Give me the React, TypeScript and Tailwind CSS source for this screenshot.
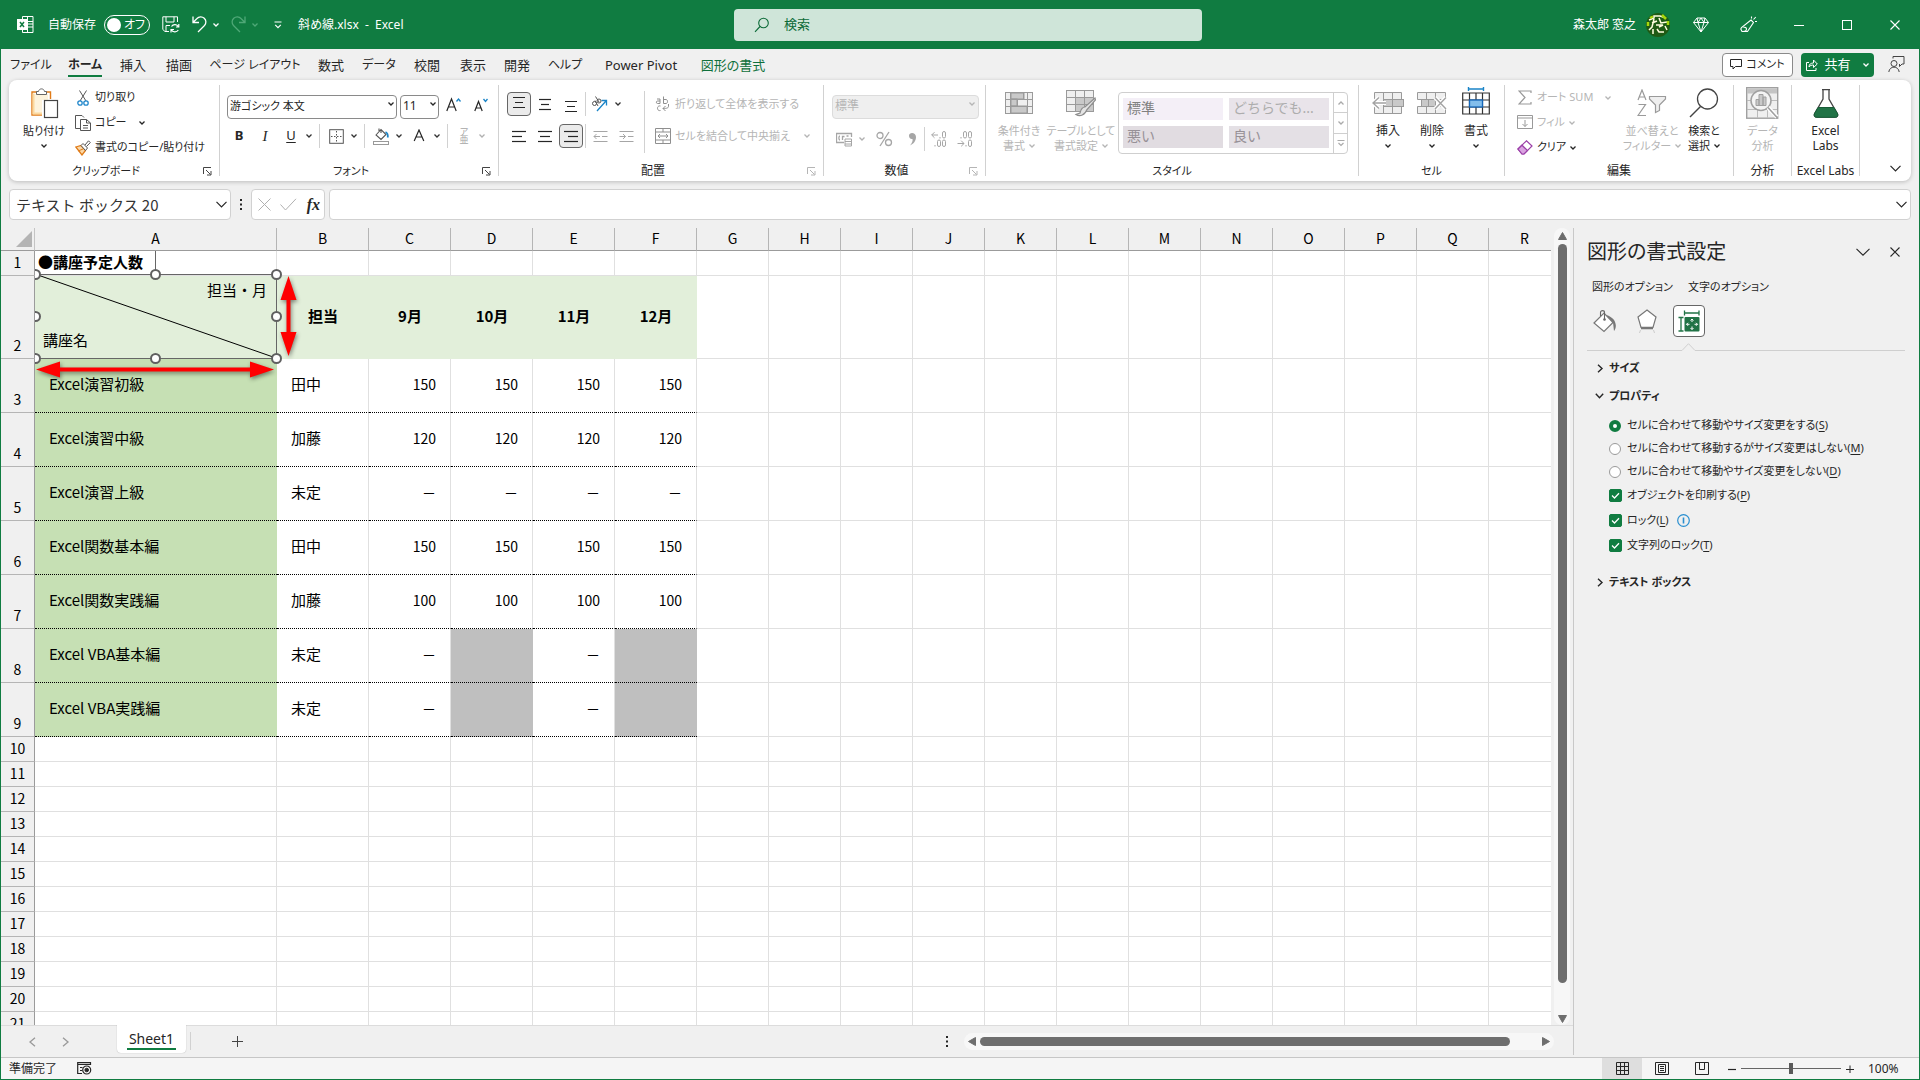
import React, { useState } from "react";

const GREEN = "#107c41";

/* Labels that contain kana are set one step smaller than pure kanji labels. */
const labelSize = (text: string) => (/[ぁ-んァ-ヶ]/.test(text) ? "text-[11px]" : "text-xs");

type SvgProps = { w: number; h: number; children: React.ReactNode; className?: string };
function Svg({ w, h, children, className = "" }: SvgProps) {
  return (
    <svg width={w} height={h} viewBox={`0 0 ${w} ${h}`} fill="none" stroke="currentColor" className={`shrink-0 ${className}`} aria-hidden="true">
      {children}
    </svg>
  );
}

function Chevron({ className = "" }: { className?: string }) {
  return (
    <Svg w={6} h={4} className={className}>
      <path d="M0.5 0.5 L3 3 L5.5 0.5" strokeWidth="1.3" />
    </Svg>
  );
}

function BigChevron({ className = "" }: { className?: string }) {
  return (
    <Svg w={11} h={7} className={className}>
      <path d="M0.5 0.8 L5.5 5.8 L10.5 0.8" strokeWidth="1.2" />
    </Svg>
  );
}

function DropArrow({ disabled = false }: { disabled?: boolean }) {
  return (
    <button aria-label="その他のオプション" disabled={disabled} className="flex h-6 w-3 items-center justify-center text-[#333] disabled:text-[#b0b0b0]">
      <Chevron />
    </button>
  );
}

function Launcher({ disabled = false }: { disabled?: boolean }) {
  return (
    <Svg w={9} h={9} className={disabled ? "text-[#b5b5b5]" : "text-[#444]"}>
      <path d="M0.5 7 V0.5 H8 M3 3 L7.5 7.5 M8 4 V8 H4" />
    </Svg>
  );
}

function Group({ label, width, launcher, disabledLauncher, children }: { label: string; width: string; launcher?: boolean; disabledLauncher?: boolean; children: React.ReactNode }) {
  return (
    <section aria-label={label} className={`flex shrink-0 flex-col border-r border-[#d1d1d1] ${width}`}>
      <div className="flex min-h-0 flex-1">{children}</div>
      <div className="flex h-2.5 items-center leading-3.5">
        <span className={`flex-1 text-center whitespace-nowrap ${labelSize(label)}`}>{label}</span>
        {launcher && (
          <span className="flex w-4">
            <Launcher disabled={disabledLauncher} />
          </span>
        )}
      </div>
    </section>
  );
}

function IconButton({ label, pressed = false, disabled = false, children }: { label: string; pressed?: boolean; disabled?: boolean; children: React.ReactNode }) {
  return (
    <button
      aria-label={label}
      aria-pressed={pressed}
      disabled={disabled}
      className={`flex h-6 w-6 shrink-0 items-center justify-center rounded border disabled:text-[#a6a6a6] ${pressed ? "border-[#666] bg-[#ebebeb]" : "border-transparent"}`}
    >
      {children}
    </button>
  );
}

function BigButton({ icon, lines, drop, width, disabled = false }: { icon: React.ReactNode; lines: string[]; drop?: boolean; width: string; disabled?: boolean }) {
  return (
    <button disabled={disabled} className={`flex shrink-0 flex-col items-center pt-0.5 leading-[15px] whitespace-nowrap disabled:text-[#b5b5b5] ${labelSize(lines[0])} ${width}`}>
      <span className="mb-1 flex h-8 items-center justify-center">{icon}</span>
      {lines.map((line, i) => (
        <span key={line} className="flex h-[15px] items-center gap-1">
          {line}
          {drop && lines.length > 1 && i === lines.length - 1 && <Chevron />}
        </span>
      ))}
      {drop && lines.length === 1 && (
        <span className="flex h-[15px] items-center">
          <Chevron />
        </span>
      )}
    </button>
  );
}

function RowButton({ icon, text, drop, disabled = false, wide = false }: { icon: React.ReactNode; text: string; drop?: boolean; disabled?: boolean; wide?: boolean }) {
  return (
    <button disabled={disabled} className={`flex h-[25px] items-center whitespace-nowrap disabled:text-[#b5b5b5] ${labelSize(text)}`}>
      <span className="mr-1 flex w-4 justify-center">{icon}</span>
      {text}
      {drop && <Chevron className={wide ? "ml-3" : "ml-1"} />}
    </button>
  );
}

const VSep = () => <span className="mx-1 h-6 w-px shrink-0 bg-[#d1d1d1]" />;

function Lines({ rows }: { rows: [number, number][] }) {
  return (
    <Svg w={16} h={15}>
      {rows.map(([a, b], i) => (
        <path key={i} d={`M${a} ${i * 5 + 2.5} H${b}`} strokeWidth="1.2" />
      ))}
    </Svg>
  );
}

/* ---------- title bar ---------- */

function TitleBar() {
  return (
    <header className="flex h-[49px] shrink-0 items-center bg-[#107c41] pt-2 pb-2 text-white">
      <div className="flex flex-1 items-center pl-4 text-xs whitespace-nowrap">
        <Svg w={17} h={17}>
          <path d="M5.5 3 V0.5 H16 V16.5 H5.5 V14 M5.5 5.5 H16 M9 11 H16 M10.5 0.5 V16.5 M16 8 H9" />
          <rect x="0.5" y="3.5" width="9" height="10" fill="white" />
          <path d="M3 6 L7 11 M7 6 L3 11" stroke={GREEN} strokeWidth="1.5" />
        </Svg>
        <span className="ml-3.5">自動保存</span>
        <button role="switch" aria-checked="false" aria-label="自動保存" className="ml-2 flex h-5 w-[46px] items-center justify-between rounded-full border border-white pr-1 pl-0.5 text-xs leading-none">
          <span className="h-3.5 w-3.5 rounded-full bg-white" />
          オフ
        </button>
        <button aria-label="上書き保存" className="ml-3">
          <Svg w={18} h={17}>
            <path d="M7 15.5 H3 L0.8 13.5 V0.8 H15.5 V6 M4 0.8 V6 H12 V0.8 M4 15 V9.5 H8" />
            <path d="M16.8 8 V11 H14 M16.5 11 A4 4 0 0 0 9.5 10.5 M9 16.5 V13.5 H12 M9.3 13.5 A4 4 0 0 0 16.3 14" strokeWidth="1.2" />
          </Svg>
        </button>
        <button aria-label="元に戻す" className="ml-3">
          <Svg w={15} h={17}>
            <path d="M1 0.5 V6.5 H7 M1 6.5 L5 2.5 A5 5 0 0 1 12.5 9.5 L6 16" strokeWidth="1.3" />
          </Svg>
        </button>
        <Chevron className="ml-1.5" />
        <button aria-label="やり直し" className="ml-3 text-[#4fa877]">
          <Svg w={15} h={17}>
            <path d="M14 0.5 V6.5 H8 M14 6.5 L10 2.5 A5 5 0 0 0 2.5 9.5 L9 16" strokeWidth="1.3" />
          </Svg>
        </button>
        <Chevron className="ml-1.5 text-[#4fa877]" />
        <Svg w={8} h={8} className="ml-4">
          <path d="M0.5 1 H7.5 M1.2 3.8 L4 6.6 L6.8 3.8" strokeWidth="1.2" />
        </Svg>
        <h1 className="ml-4">斜め線.xlsx&nbsp; -&nbsp; Excel</h1>
      </div>
      <label className="flex h-8 w-[468px] items-center gap-3.5 rounded bg-[#cfe5d9] pl-5 text-[#0b6a37]">
        <Svg w={16} h={16}>
          <circle cx="9.5" cy="6" r="4.8" strokeWidth="1.1" />
          <path d="M6 9.5 L1 14.8" strokeWidth="1.1" />
        </Svg>
        <input aria-label="検索" placeholder="検索" className="w-full bg-transparent text-[13px] outline-none placeholder:text-[#0b6a37]" />
      </label>
      <div className="flex flex-1 items-center justify-end text-xs">
        <span className="mr-2.5">森太郎 窓之</span>
        <Svg w={24} h={24} className="mr-[23px]">
          <circle cx="12" cy="12" r="12" fill="#1f5a14" stroke="none" />
          <path d="M3 7 L8 5 V3 H14 L20 5 M6 10 L11 8 M8 6 L6 14 L3 17 M13 5 L15 10 L21 9 M10 12 H17 L13 14 M7 16 V21 M11 16 L13 19 H18 M19 13 L21 17" stroke="#fffde0" strokeWidth="1.5" />
          <path d="M4 5 L7 3.5 M16 2 L20 6 M22 8 V12 M2 9 V13" stroke="#a6d80c" strokeWidth="2.5" />
        </Svg>
        <button aria-label="Premium" className="mr-[31px]">
          <Svg w={16} h={16}>
            <path d="M4 1 H12 L15.5 5.5 L8 15 L0.5 5.5 Z M0.5 5.5 H15.5 M5 5.5 L8 15 L11 5.5 L8 1 L5 5.5 L4 1 M11 5.5 L12 1" />
          </Svg>
        </button>
        <button aria-label="新機能" className="mr-[37px]">
          <Svg w={17} h={17}>
            <path d="M11 4 L13.5 6.5 L7.5 15.5 H2 L0.8 13 L1.5 11.5 Z M3 15.5 C5.5 15.5 6.5 14.5 6.5 13 C6.5 11.5 5 10.8 3.5 11.5 M11.5 2.5 V0.5 M13.5 3.5 L15.8 1 M15 5.5 H17" strokeWidth="1.1" />
          </Svg>
        </button>
        <button aria-label="最小化" className="mr-[38px]">
          <Svg w={10} h={10}>
            <path d="M0 5.5 H10" />
          </Svg>
        </button>
        <button aria-label="元に戻す (縮小)" className="mr-[38px]">
          <Svg w={10} h={10}>
            <rect x="0.5" y="0.5" width="9" height="9" />
          </Svg>
        </button>
        <button aria-label="閉じる" className="mr-[19px]">
          <Svg w={10} h={10}>
            <path d="M0.5 0.5 L9.5 9.5 M9.5 0.5 L0.5 9.5" strokeWidth="1.1" />
          </Svg>
        </button>
      </div>
    </header>
  );
}

/* ---------- ribbon tabs ---------- */

const tabs: { label: string; w: string }[] = [
  { label: "ファイル", w: "w-14" },
  { label: "ホーム", w: "w-13" },
  { label: "挿入", w: "w-11" },
  { label: "描画", w: "w-12" },
  { label: "ページ レイアウト", w: "w-26" },
  { label: "数式", w: "w-12" },
  { label: "データ", w: "w-12" },
  { label: "校閲", w: "w-12" },
  { label: "表示", w: "w-11" },
  { label: "開発", w: "w-11" },
  { label: "ヘルプ", w: "w-13" },
  { label: "Power Pivot", w: "w-25" },
  { label: "図形の書式", w: "w-21" },
];

function TabRow() {
  return (
    <nav className="flex h-[31px] shrink-0 items-center text-[13px]">
      <div role="tablist" className="flex flex-1 pl-0.5">
        {tabs.map((t) => (
          <button
            key={t.label}
            role="tab"
            aria-selected={t.label === "ホーム"}
            className={`flex h-6 shrink-0 justify-center whitespace-nowrap ${/[ァ-ヶ]/.test(t.label) ? "text-xs" : "text-[13px]"} ${t.w}`}
          >
            <span
              className={
                t.label === "ホーム"
                  ? "border-b-2 border-[#107c41] leading-[23px] font-bold"
                  : t.label === "図形の書式"
                    ? "leading-6 text-[#0f703b]"
                    : "leading-6"
              }
            >
              {t.label}
            </span>
          </button>
        ))}
      </div>
      <button className="flex h-6 w-[71px] items-center justify-center gap-1 rounded border border-[#8a8a8a] bg-white text-[11px] whitespace-nowrap">
        <Svg w={12} h={11}>
          <path d="M0.5 0.5 H11.5 V7.5 H5.5 L3 10 V7.5 H0.5 Z" />
        </Svg>
        コメント
      </button>
      <button className="ml-2 flex h-6 w-[73px] items-center justify-center gap-1.5 rounded bg-[#107c41] text-[13px] text-white">
        <Svg w={12} h={12}>
          <path d="M3 3.5 H0.5 V11.5 H10 V9 M3 8 C3 5 5 4 7.5 4 V1 L11.3 5 L7.5 8.5 V6 C5.5 6 4 6.5 3 8 Z" />
        </Svg>
        共有
        <Chevron className="ml-1.5" />
      </button>
      <button aria-label="フィードバック" className="mr-3.5 ml-3.5 text-[#444]">
        <Svg w={17} h={17}>
          <circle cx="6" cy="7.5" r="3" />
          <path d="M0.8 16 C1.5 9.5 10.5 9.5 11.2 16 M5 2.5 V0.5 H16 V8 H14 L11.5 10.5 V8" />
        </Svg>
      </button>
    </nav>
  );
}

/* ---------- ribbon icons ---------- */

const PasteIcon = (
  <Svg w={29} h={32}>
    <path d="M7 5 H2 V28 H12" stroke="#e07b18" strokeWidth="1.4" />
    <path d="M4 7 V26 H12 V13 H18 V7 Z" fill="#fdf3dd" stroke="none" />
    <path d="M3.5 6.5 V26.5 H12" stroke="#fbd9a0" strokeWidth="2" />
    <path d="M16 5 H20.5 V12" stroke="#e07b18" strokeWidth="1.4" />
    <path d="M6.5 7.5 V4.5 H8.5 C9 1 14 1 14.5 4.5 H16.5 V7.5 Z" fill="#fff" stroke="#666" />
    <rect x="14.5" y="13.5" width="13" height="17" fill="#fff" stroke="#444" strokeWidth="1.2" />
  </Svg>
);
const CutIcon = (
  <Svg w={12} h={16}>
    <path d="M2.5 0.5 L9 11 M9.5 0.5 L3 11" stroke="#555" />
    <circle cx="3" cy="13" r="2.2" stroke="#2288cc" strokeWidth="1.3" />
    <circle cx="9" cy="13" r="2.2" stroke="#2288cc" strokeWidth="1.3" />
  </Svg>
);
const CopyIcon = (
  <Svg w={16} h={16}>
    <path d="M6 13.5 H0.5 V0.5 H7 L9 2.5" stroke="#555" />
    <path d="M5.5 4.5 H11.5 L15.5 8 V15.5 H5.5 Z M11.5 4.5 V8 H15.5 M8 10.5 H13 M8 13 H13" fill="#fff" stroke="#555" />
  </Svg>
);
const BrushIcon = (
  <Svg w={16} h={16}>
    <path d="M0.8 7 L6 5.5 L10.5 10.5 L7 15 Z" fill="#fbd9a8" stroke="#e07b18" strokeWidth="1.3" />
    <path d="M3 11 L8 9" stroke="#e07b18" />
    <path d="M6 5.5 L8 3.5 L12.5 8 L10.5 10.5 Z M10 5 L13.5 0.8 L15.3 2.6 L11.5 6.5" fill="#fff" stroke="#555" />
  </Svg>
);
const CondIcon = (
  <Svg w={28} h={28} className="text-[#9a9a9a]">
    <rect x="0.5" y="3.5" width="27" height="21" fill="#efefef" />
    <rect x="6" y="4" width="13" height="6" fill="#c9c9c9" />
    <rect x="6" y="10" width="6" height="7" fill="#c9c9c9" />
    <rect x="6" y="17" width="16" height="7" fill="#c9c9c9" />
    <path d="M0.5 10.5 H27.5 M0.5 17.5 H27.5 M5.5 3.5 V24.5 M22.5 3.5 V24.5 M12.5 10 V17 M18.5 3.5 V10.5" />
  </Svg>
);
const TableFmtIcon = (
  <Svg w={30} h={28} className="text-[#9a9a9a]">
    <rect x="0.5" y="1.5" width="27" height="21" fill="#efefef" />
    <rect x="10" y="9" width="17" height="13" fill="#c9c9c9" stroke="none" />
    <path d="M0.5 8.5 H27.5 M0.5 15.5 H27.5 M9.5 1.5 V22.5 M18.5 1.5 V22.5" />
    <path d="M29 9 L19 18 C16 18 15 20 14 24 L10 25.5 C14 28 19 26 21 20.5 L29.5 11 Z" fill="#e4e4e4" stroke="#8d8d8d" strokeWidth="1.2" />
  </Svg>
);
const InsertIcon = (
  <Svg w={32} h={24} className="text-[#9a9a9a]">
    <path d="M2.5 1.5 H29.5 V22.5 H2.5 Z M11.5 1.5 V22.5 M20.5 1.5 V22.5" fill="#efefef" />
    <rect x="11.5" y="8.5" width="20" height="7" fill="#c9c9c9" />
    <path d="M20.5 8.5 V15.5" />
    <path d="M14 12 H2 M7 6.5 L1 12 L7 17.5" stroke="#fff" strokeWidth="4" />
    <path d="M14 12 H1 M7 6.5 L1 12 L7 17.5" stroke="#a3a3a3" strokeWidth="1.4" />
  </Svg>
);
const DeleteIcon = (
  <Svg w={31} h={24} className="text-[#9a9a9a]">
    <path d="M0.5 1.5 H28.5 V8.5 H0.5 Z M0.5 15.5 H28.5 V22.5 H0.5 Z M9.5 1.5 V8.5 M18.5 1.5 V8.5 M9.5 15.5 V22.5 M18.5 15.5 V22.5" fill="#efefef" />
    <rect x="4.5" y="8.5" width="14" height="7" fill="#c9c9c9" />
    <path d="M11.5 8.5 V15.5" />
    <path d="M18 6.5 L29 18 M29 6.5 L18 18" stroke="#fff" strokeWidth="4" />
    <path d="M18 6.5 L29 18 M29 6.5 L18 18" stroke="#a3a3a3" strokeWidth="1.4" />
  </Svg>
);
const FormatIcon = (
  <Svg w={28} h={32} className="text-[#333]">
    <path d="M6.5 2 H21.5 M6.5 0 V4 M21.5 0 V4" stroke="#1a84c7" strokeWidth="1.4" />
    <path d="M0.7 6 H27.3 V27 H0.7 Z M0.7 13 H27.3 M0.7 20 H27.3 M7.5 6 V27 M20.5 6 V27 M14 6 V13 M14 20 V27" strokeWidth="1.2" fill="#fff" />
    <rect x="7.5" y="13" width="13" height="7" fill="#83beec" stroke="#1466b8" strokeWidth="1.3" />
  </Svg>
);
const SortIcon = (
  <Svg w={30} h={28} className="text-[#9a9a9a]">
    <path d="M1 11 L5 1 L9 11 M2.3 8 H7.7 M1.5 15.5 H8.5 L1 26.5 H9" strokeWidth="1.2" />
    <path d="M12.5 7.5 H28.5 V10 L22.5 16 V21.5 L18.5 23.5 V16 L12.5 10 Z" fill="#efefef" strokeWidth="1.2" />
  </Svg>
);
const FindIcon = (
  <Svg w={30} h={30} className="text-[#444]">
    <circle cx="18.5" cy="11" r="10" strokeWidth="1.3" fill="#fff" />
    <path d="M11.5 18.5 L1 29" strokeWidth="1.5" />
  </Svg>
);
const AnalyzeIcon = (
  <Svg w={33} h={32} className="text-[#a0a0a0]">
    <rect x="0.7" y="0.7" width="31" height="30.5" fill="#efefef" strokeWidth="1.4" />
    <path d="M1 4 H31" strokeWidth="5" stroke="#c4c4c4" />
    <path d="M1 13.5 H31 M1 22.5 H31 M11.5 22 V31 M21.5 22 V31" stroke="#bbb" />
    <circle cx="15" cy="13.5" r="10" fill="#f4f4f4" strokeWidth="1.5" />
    <path d="M10 18.5 V12.5 H13 V18.5 Z M13 18.5 V7.5 H17 V18.5 Z M17 18.5 V10 H20 V18.5 Z" fill="#c9c9c9" />
    <path d="M22 20.5 L31 30" stroke="#fff" strokeWidth="4" />
    <path d="M22 20.5 L31.5 31" strokeWidth="1.6" />
  </Svg>
);
const FlaskIcon = (
  <Svg w={26} h={29}>
    <path d="M9 0.7 H17 M10 1 V10 L1.5 25 C1 27 1.5 28 3.5 28 H22.5 C24.5 28 25 27 24.5 25 L16 10 V1" stroke="#444" strokeWidth="1.3" />
    <path d="M5 18.5 H21 L24.8 25 C25 27.5 24 28.3 22.5 28.3 H3.5 C2 28.3 1 27.5 1.2 25 Z" fill="#217346" stroke="#185c37" />
  </Svg>
);

function Gallery() {
  const cells = [
    { t: "標準", c: "bg-[#f4eff7] text-[#808080]" },
    { t: "どちらでも...", c: "bg-[#e9e4ea] text-[#adadad]" },
    { t: "悪い", c: "bg-[#e1dce1] text-[#979197]" },
    { t: "良い", c: "bg-[#e4e0e5] text-[#979197]" },
  ];
  return (
    <div className="mt-[7px] ml-1.5 flex h-[62px] w-[230px] rounded border border-[#cfcfcf] bg-white">
      <div className="grid flex-1 grid-cols-2 grid-rows-2 gap-1.5 px-1 py-[5px]">
        {cells.map((c) => (
          <button key={c.t} disabled className={`overflow-hidden pb-0.5 pl-1 text-left text-sm leading-5 whitespace-nowrap [font-feature-settings:normal] ${c.c}`}>
            {c.t}
          </button>
        ))}
      </div>
      <div className="flex w-3.5 flex-col divide-y divide-[#cfcfcf] border-l border-[#cfcfcf] text-[#aaa]">
        <button disabled aria-label="前の行" className="flex flex-1 items-center justify-center">
          <Chevron className="rotate-180" />
        </button>
        <button disabled aria-label="次の行" className="flex flex-1 items-center justify-center">
          <Chevron />
        </button>
        <button disabled aria-label="その他" className="flex flex-1 items-center justify-center">
          <Svg w={8} h={7}>
            <path d="M0.5 0.5 H7.5 M1.5 3 L4 5.5 L6.5 3" strokeWidth="1.2" />
          </Svg>
        </button>
      </div>
    </div>
  );
}

function Ribbon() {
  return (
    <div className="mx-2 flex h-[101px] shrink-0 rounded-lg bg-white py-[5px] shadow-[0_1px_4px_rgba(0,0,0,0.22)]">
      <Group label="クリップボード" width="w-[211px]" launcher>
        <div className="pl-[7px]">
          <BigButton icon={PasteIcon} lines={["貼り付け"]} drop width="w-14" />
        </div>
        <div className="ml-[3px] flex flex-col">
          <RowButton icon={CutIcon} text="切り取り" />
          <RowButton icon={CopyIcon} text="コピー" drop wide />
          <RowButton icon={BrushIcon} text="書式のコピー/貼り付け" />
        </div>
      </Group>

      <Group label="フォント" width="w-[279px]" launcher>
        <div className="flex flex-col gap-2 pt-[7px] pl-[7px]">
          <div className="flex h-6 gap-[3px]">
            <div className="relative w-[170px]">
              <select aria-label="フォント" className="h-6 w-full appearance-none rounded border border-[#8a8a8a] bg-white pb-0.5 pl-0.5 text-[11px] leading-5">
                <option>游ゴシック 本文</option>
              </select>
              <Chevron className="pointer-events-none absolute top-2.5 right-[3px]" />
            </div>
            <div className="relative w-[39px]">
              <select aria-label="フォント サイズ" className="h-6 w-full appearance-none rounded border border-[#8a8a8a] bg-white pb-0.5 pl-0.5 text-xs leading-5">
                <option>11</option>
              </select>
              <Chevron className="pointer-events-none absolute top-2.5 right-[3px]" />
            </div>
            <IconButton label="フォント サイズの拡大">
              <Svg w={16} h={15}>
                <path d="M0.8 14 L5.5 2 L10.2 14 M2.5 10 H8.5" strokeWidth="1.2" />
                <path d="M10.5 4.5 L12.5 2 L14.5 4.5" stroke="#1a84c7" strokeWidth="1.3" />
              </Svg>
            </IconButton>
            <IconButton label="フォント サイズの縮小">
              <Svg w={14} h={15}>
                <path d="M0.8 14 L4.5 4.5 L8.2 14 M2.2 11 H6.8" strokeWidth="1.2" />
                <path d="M9.5 2 L11.5 4.5 L13.5 2" stroke="#1a84c7" strokeWidth="1.3" />
              </Svg>
            </IconButton>
          </div>
          <div className="flex h-6 items-center text-[13px]">
            <IconButton label="太字">
              <b>B</b>
            </IconButton>
            <span className="w-0.5" />
            <IconButton label="斜体">
              <i className="font-['Liberation_Serif',serif] text-[15px]">I</i>
            </IconButton>
            <span className="w-0.5" />
            <IconButton label="下線">
              <span className="underline underline-offset-2">U</span>
            </IconButton>
            <DropArrow />
            <VSep />
            <IconButton label="罫線">
              <Svg w={15} h={15} className="text-[#555]">
                <rect x="0.7" y="0.7" width="13.6" height="13.6" />
                <path d="M7.5 2 V13 M2 7.5 H13" strokeDasharray="1.5 1.5" />
              </Svg>
            </IconButton>
            <DropArrow />
            <VSep />
            <IconButton label="塗りつぶしの色">
              <Svg w={17} h={17}>
                <path d="M3 7 L8 1.5 L13 6.5 L8 11.5 Z M6 3 V0.5 M8 1.5 V5" stroke="#555" strokeWidth="1.1" />
                <path d="M12.5 4 C15 5 15 7 14.8 9.5" stroke="#1a84c7" strokeWidth="1.8" />
                <rect x="0.5" y="13.5" width="15" height="3" fill="#fff" stroke="#999" />
              </Svg>
            </IconButton>
            <DropArrow />
            <span className="w-0.5" />
            <IconButton label="フォントの色">
              <Svg w={12} h={14}>
                <path d="M1.2 12 L6 1 L10.8 12 M2.9 8 H9.1" strokeWidth="1.2" />
              </Svg>
            </IconButton>
            <DropArrow />
            <VSep />
            <IconButton label="ふりがなの表示/非表示" disabled>
              <span className="flex flex-col items-center text-[9px] leading-2">
                <span>ア</span>
                <span>亜</span>
              </span>
            </IconButton>
            <DropArrow disabled />
          </div>
        </div>
      </Group>

      <Group label="配置" width="w-[325px]" launcher disabledLauncher>
        <div className="flex flex-col gap-2 pt-[7px] pl-2">
          <div className="flex h-6 items-center gap-0.5">
            <IconButton label="上揃え" pressed>
              <Svg w={16} h={18}>
                <path d="M2 2.5 H14 M4 7.5 H12 M2 12.5 H14" strokeWidth="1.2" />
              </Svg>
            </IconButton>
            <IconButton label="上下中央揃え">
              <Lines rows={[[2, 14], [4, 12], [2, 14]]} />
            </IconButton>
            <IconButton label="下揃え">
              <Svg w={16} h={18}>
                <path d="M2 6.5 H14 M4 11.5 H12 M2 16.5 H14" strokeWidth="1.2" />
              </Svg>
            </IconButton>
            <span className="h-6 w-px bg-[#d1d1d1]" />
            <div className="flex">
              <IconButton label="方向">
                <Svg w={18} h={16}>
                  <path d="M6 15 L15 5 M10.5 4.5 H15.5 V9.5" stroke="#1a84c7" strokeWidth="1.3" />
                  <circle cx="3.5" cy="7.5" r="2" stroke="#555" />
                  <circle cx="8" cy="5" r="2" stroke="#555" />
                  <path d="M4 4.5 L7 10 M4.5 0.5 L8 6" stroke="#555" />
                </Svg>
              </IconButton>
              <DropArrow />
            </div>
          </div>
          <div className="flex h-6 items-center gap-0.5">
            <IconButton label="左揃え">
              <Lines rows={[[1, 15], [1, 11], [1, 15]]} />
            </IconButton>
            <IconButton label="中央揃え">
              <Lines rows={[[1, 15], [3, 13], [1, 15]]} />
            </IconButton>
            <IconButton label="右揃え" pressed>
              <Lines rows={[[1, 15], [5, 15], [1, 15]]} />
            </IconButton>
            <span className="h-6 w-px bg-[#d1d1d1]" />
            <IconButton label="インデントを減らす" disabled>
              <Svg w={15} h={13}>
                <path d="M0.5 1.5 H14.5 M9 6.5 H14.5 M0.5 11.5 H14.5 M7 6.5 H1 M3.5 4 L1 6.5 L3.5 9" />
              </Svg>
            </IconButton>
            <IconButton label="インデントを増やす" disabled>
              <Svg w={15} h={13}>
                <path d="M0.5 1.5 H14.5 M9 6.5 H14.5 M0.5 11.5 H14.5 M0.5 6.5 H6.5 M4 4 L6.5 6.5 L4 9" />
              </Svg>
            </IconButton>
          </div>
        </div>
        <span className="mt-1.5 ml-1.5 h-[62px] w-px bg-[#d1d1d1]" />
        <div className="ml-2.5 flex flex-col gap-2 pt-[7px]">
          <button disabled className="flex h-6 items-center gap-1 text-[11px] whitespace-nowrap text-[#b5b5b5]">
            <Svg w={16} h={16} className="text-[#8f8f8f]">
              <path d="M2 3 H5 V7.5 H2.5 C1 7.5 1 5 2.5 5 H5 M8.5 0.5 V7.5 H11 C13 7.5 13 3.5 11 3.5 H8.5 M5.5 10 C1.5 9 1.5 15.5 5.5 14.5 M13.5 8 V10 C13.5 12 12 12.5 8 12.5 M10.5 10 L8 12.5 L10.5 15" />
            </Svg>
            折り返して全体を表示する
          </button>
          <button disabled className="flex h-6 items-center gap-1 text-[11px] whitespace-nowrap text-[#b5b5b5]">
            <Svg w={16} h={16} className="text-[#8f8f8f]">
              <path d="M0.5 0.5 H15.5 V15.5 H0.5 Z M0.5 4 H15.5 M0.5 12 H15.5 M8 0.5 V4 M8 12 V15.5 M3 8 H13 M5 6 L3 8 L5 10 M11 6 L13 8 L11 10" />
            </Svg>
            セルを結合して中央揃え
            <Chevron className="ml-2.5" />
          </button>
        </div>
      </Group>

      <Group label="数値" width="w-[162px]" launcher disabledLauncher>
        <div className="flex flex-col gap-2 pt-[7px] pl-2">
          <div className="relative w-[147px]">
            <select aria-label="数値の書式" disabled className="h-6 w-full appearance-none rounded border border-[#dcdcdc] bg-[#efefef] pb-0.5 pl-0.5 text-xs leading-5 text-[#b5b5b5] opacity-100">
              <option>標準</option>
            </select>
            <Chevron className="pointer-events-none absolute top-2.5 right-1 text-[#b5b5b5]" />
          </div>
          <div className="flex h-6 items-center text-[#999]">
            <IconButton label="通貨表示形式" disabled>
              <Svg w={17} h={15}>
                <path d="M8 10.5 H0.5 V1.5 H15.5 V5 M4 4 C2.5 4 2.5 8 4 8 M6.5 8 V4.5 H8.5 M10.5 4 H12.5" strokeWidth="1.3" />
                <path d="M9 7 H15.5 V14 H9 Z M9 9.5 H15.5 M9 12 H15.5" />
              </Svg>
            </IconButton>
            <DropArrow disabled />
            <span className="w-1" />
            <IconButton label="パーセント スタイル" disabled>
              <Svg w={17} h={16}>
                <circle cx="4" cy="4.5" r="3" strokeWidth="1.3" />
                <circle cx="12.5" cy="11.5" r="3" strokeWidth="1.3" />
                <path d="M13 1 L4 15" strokeWidth="1.3" />
              </Svg>
            </IconButton>
            <span className="w-1" />
            <IconButton label="桁区切りスタイル" disabled>
              <Svg w={9} h={14}>
                <path d="M1 3.5 C1 0 8 0 8 5 C8 9 5.5 12 2 13.5 C4 11 5 9 4.5 7 C2.5 7.5 1 6 1 3.5 Z" fill="currentColor" stroke="none" />
              </Svg>
            </IconButton>
            <span className="mr-0.5 h-6 w-px bg-[#d1d1d1]" />
            <IconButton label="小数点以下の表示桁数を増やす" disabled>
              <Svg w={16} h={16}>
                <path d="M7 4 H0.7 M3.5 1.2 L0.7 4 L3.5 6.8" />
                <rect x="11.5" y="0.5" width="3" height="6.5" rx="1.5" />
                <rect x="6.5" y="9" width="3" height="6.5" rx="1.5" />
                <rect x="11.5" y="9" width="3" height="6.5" rx="1.5" />
                <path d="M9 6 V7.5 M4 14 V15.5" />
              </Svg>
            </IconButton>
            <span className="w-0.5" />
            <IconButton label="小数点以下の表示桁数を減らす" disabled>
              <Svg w={16} h={16}>
                <path d="M0.5 12.5 H7 M4.2 9.7 L7 12.5 L4.2 15.3" />
                <rect x="6.5" y="0.5" width="3" height="6.5" rx="1.5" />
                <rect x="11.5" y="0.5" width="3" height="6.5" rx="1.5" />
                <rect x="11.5" y="9" width="3" height="6.5" rx="1.5" />
                <path d="M4 6 V7.5 M9 14 V15.5" />
              </Svg>
            </IconButton>
          </div>
        </div>
      </Group>

      <Group label="スタイル" width="w-[373px]">
        <span className="w-0.5" />
        <BigButton icon={CondIcon} lines={["条件付き", "書式"]} drop width="w-[62px]" disabled />
        <BigButton icon={TableFmtIcon} lines={["テーブルとして", "書式設定"]} drop width="w-[62px]" disabled />
        <Gallery />
      </Group>

      <Group label="セル" width="w-[146px]">
        <span className="w-[7px]" />
        <BigButton icon={InsertIcon} lines={["挿入"]} drop width="w-11" />
        <BigButton icon={DeleteIcon} lines={["削除"]} drop width="w-11" />
        <BigButton icon={FormatIcon} lines={["書式"]} drop width="w-11" />
      </Group>

      <Group label="編集" width="w-[229px]">
        <div className="flex w-[113px] shrink-0 flex-col pl-3">
          <RowButton
            icon={
              <Svg w={14} h={15} className="text-[#999]">
                <path d="M13 3 V1 H1 L7 7.5 L1 14 H13 V12" strokeWidth="1.2" />
              </Svg>
            }
            text="オート SUM"
            drop
            wide
            disabled
          />
          <RowButton
            icon={
              <Svg w={16} h={15} className="text-[#999]">
                <path d="M0.5 0.5 H15.5 V13.5 H0.5 Z M0.5 3 H15.5 M8 5 V11.5 M5.5 9 L8 11.5 L10.5 9" />
              </Svg>
            }
            text="フィル"
            drop
            disabled
          />
          <RowButton
            icon={
              <Svg w={16} h={15}>
                <path d="M1 9 L9.5 0.8 L15 6 L7 14 H5 Z" fill="#fff" stroke="#9b3fa8" strokeWidth="1.2" />
                <path d="M1 9 L5 5.2 L10.5 10.5 L7 14 H5 Z" fill="#d9a3e0" stroke="#9b3fa8" strokeWidth="1.2" />
              </Svg>
            }
            text="クリア"
            drop
          />
        </div>
        <BigButton icon={SortIcon} lines={["並べ替えと", "フィルター"]} drop width="w-[68px]" disabled />
        <BigButton icon={FindIcon} lines={["検索と", "選択"]} drop width="w-9" />
      </Group>

      <Group label="分析" width="w-[58px]">
        <BigButton icon={AnalyzeIcon} lines={["データ", "分析"]} width="w-full" disabled />
      </Group>

      <Group label="Excel Labs" width="w-[68px]">
        <BigButton icon={FlaskIcon} lines={["Excel", "Labs"]} width="w-full" />
      </Group>

      <div className="flex flex-1 items-end justify-end pr-2.5 pb-1">
        <button aria-label="リボンの表示オプション">
          <BigChevron />
        </button>
      </div>
    </div>
  );
}

/* ---------- formula bar ---------- */

function FormulaBar() {
  return (
    <div className="mx-2 mt-2 mb-2 flex h-[31px] shrink-0 font-['Noto_Sans_CJK_JP',sans-serif]">
      <div className="relative w-[222px]">
        <input
          aria-label="名前ボックス"
          defaultValue="テキスト ボックス 20"
          className="h-full w-full rounded border border-[#d1d1d1] bg-white pr-6 pl-1.5 text-[15px] text-[#333] outline-none [font-feature-settings:normal]"
        />
        <BigChevron className="pointer-events-none absolute top-3 right-1" />
      </div>
      <div className="flex w-5 items-center justify-center">
        <Svg w={2} h={11}>
          <path d="M1 0 V2 M1 4.5 V6.5 M1 9 V11" strokeWidth="2" />
        </Svg>
      </div>
      <div className="flex w-[74px] items-center justify-between rounded border border-[#d1d1d1] bg-white pr-1 pl-1.5">
        <Svg w={13} h={13} className="text-[#b0b0b0]">
          <path d="M0.5 0.5 L12.5 12.5 M12.5 0.5 L0.5 12.5" />
        </Svg>
        <Svg w={17} h={13} className="text-[#b0b0b0]">
          <path d="M0.5 6.5 L5.5 12 L16 0.8" />
        </Svg>
        <button aria-label="関数の挿入" className="font-['Liberation_Serif',serif] text-base leading-none font-bold italic">
          fx
        </button>
      </div>
      <div className="relative ml-1 flex-1">
        <input aria-label="数式バー" className="h-full w-full rounded border border-[#d1d1d1] bg-white px-2 text-sm outline-none" />
        <BigChevron className="pointer-events-none absolute top-3 right-1" />
      </div>
    </div>
  );
}

/* ---------- worksheet ---------- */

const columns = "ABCDEFGHIJKLMNOPQR".split("");
const colWidth = (c: string) => (c === "A" ? "w-[242px]" : c === "B" ? "w-[92px]" : c < "G" ? "w-[82px]" : "w-[72px]");

const header = ["", "担当", "9月", "10月", "11月", "12月"];
const lessons: string[][] = [
  ["Excel演習初級", "田中", "150", "150", "150", "150"],
  ["Excel演習中級", "加藤", "120", "120", "120", "120"],
  ["Excel演習上級", "未定", "－", "－", "－", "－"],
  ["Excel関数基本編", "田中", "150", "150", "150", "150"],
  ["Excel関数実践編", "加藤", "100", "100", "100", "100"],
  ["Excel VBA基本編", "未定", "－", "", "－", ""],
  ["Excel VBA実践編", "未定", "－", "", "－", ""],
];

function RowNumber({ n }: { n: number }) {
  return (
    <th scope="row" className="border-r border-b border-r-[#9b9b9b] border-b-[#b5b5b5] bg-[#f0f0f0] px-0 pt-0 pb-0.5 align-bottom text-sm leading-[22px] font-normal">
      {n}
    </th>
  );
}

const plain = "border-r border-b border-[#e0e0e0] p-0";

function Worksheet() {
  return (
    <table className="w-[1560px] table-fixed border-separate border-spacing-0 text-black">
      <colgroup>
        <col className="w-[34px]" />
        {columns.map((c) => (
          <col key={c} className={colWidth(c)} />
        ))}
      </colgroup>
      <thead>
        <tr className="h-[23px]">
          <th aria-label="すべて選択" className="border-r border-b border-r-[#c4c4c4] border-b-[#9b9b9b] bg-[#f0f0f0] p-0">
            <Svg w={16} h={16} className="mr-0.5 ml-auto">
              <path d="M16 0 V16 H0 Z" fill="#b4b4b4" stroke="none" />
            </Svg>
          </th>
          {columns.map((c) => (
            <th key={c} scope="col" className="border-r border-b border-r-[#b5b5b5] border-b-[#9b9b9b] bg-[#f0f0f0] px-0 pt-0 pb-0.5 text-sm leading-5 font-normal">
              {c}
            </th>
          ))}
        </tr>
      </thead>
      <tbody className="text-[15px] leading-5">
        <tr className="h-[25px]">
          <RowNumber n={1} />
          {columns.map((c) => (
            <td key={c} className={c === "A" ? "border-r border-b border-[#e0e0e0] pt-0 pr-0 pb-0.5 pl-[3px] font-bold" : plain}>
              {c === "A" ? "●講座予定人数" : ""}
            </td>
          ))}
        </tr>
        <tr className="h-[83px]">
          <RowNumber n={2} />
          {columns.map((c, i) =>
            i < 6 ? (
              <td key={c} className="bg-[#e2efda] px-0 pt-0 pb-1 text-center font-bold">
                {header[i]}
              </td>
            ) : (
              <td key={c} className={plain} />
            ),
          )}
        </tr>
        {lessons.map((row, r) => (
          <tr key={row[0]} className="h-[54px]">
            <RowNumber n={r + 3} />
            {columns.map((c, i) => {
              if (i >= 6) return <td key={c} className={plain} />;
              const line = "border-b border-b-black [border-bottom-style:dotted] px-3.5 pt-0 pb-1";
              if (i === 0) return <td key={c} className={`${line} bg-[#c6e0b4]`}>{row[i]}</td>;
              if (row[i] === "") return <td key={c} className={`${line} bg-[#bfbfbf]`} />;
              return (
                <td key={c} className={i === 1 ? `${line} border-r border-r-[#e0e0e0]` : `${line} border-r border-r-[#e0e0e0] text-right text-sm`}>
                  {row[i]}
                </td>
              );
            })}
          </tr>
        ))}
        {Array.from({ length: 12 }, (_, k) => (
          <tr key={k} className="h-[25px]">
            <RowNumber n={k + 10} />
            {columns.map((c) => (
              <td key={c} className={plain} />
            ))}
          </tr>
        ))}
      </tbody>
    </table>
  );
}

/* Text box laid over A2 with its diagonal, selection handles and the two size arrows. */
function ShapeLayer() {
  const handles: [number, number][] = [
    [0, 23], [120, 23], [241, 23], [0, 65], [241, 65], [0, 107], [120, 107], [241, 107],
  ];
  return (
    <div className="pointer-events-none absolute top-[23px] left-[34px] w-[280px] overflow-hidden pt-[23px] text-[15px] leading-5 text-black">
      <div className="flex h-[84px] w-[242px] flex-col justify-between pt-1.5 pr-2.5 pb-2 pl-2">
        <span className="self-end">担当・月</span>
        <span>講座名</span>
      </div>
      <div className="h-7" />
      <svg width="280" height="135" viewBox="0 0 280 135" fill="none" className="absolute top-0 left-0" aria-hidden="true">
        <path d="M120.5 0 V23" stroke="#666" />
        <path d="M0 23.5 H241.5 V107.5 H0" stroke="#666" />
        <path d="M0 23 L241 107" stroke="#000" />
        <g className="drop-shadow-[1px_2px_2px_rgba(0,0,0,0.45)]">
          <path d="M1 118.5 L25 110.5 V116.5 H215 V110.5 L239 118.5 L215 126.5 V120.5 H25 V126.5 Z" fill="#ff0000" />
          <path d="M253.5 25 L261.5 49 H255.5 V81 H261.5 L253.5 105 L245.5 81 H251.5 V49 H245.5 Z" fill="#ff0000" />
        </g>
        {handles.map(([x, y]) => (
          <circle key={`${x}-${y}`} cx={x + 0.5} cy={y + 0.5} r="4.5" fill="#fff" stroke="#606060" strokeWidth="2" />
        ))}
      </svg>
    </div>
  );
}

function SheetArea() {
  return (
    <div className="flex min-w-0 flex-1 flex-col">
      <div className="flex min-h-0 flex-1">
        <div className="relative min-w-0 flex-1 overflow-hidden bg-white font-['Noto_Sans_CJK_JP',sans-serif] [font-feature-settings:normal]">
          <Worksheet />
          <ShapeLayer />
        </div>
        <div className="w-[22px] shrink-0 pl-[3px]">
          <div className="flex h-full w-4 flex-col items-center rounded-full bg-[#f7f7f7] pt-1 pb-0.5">
            <Svg w={9} h={8}>
              <path d="M4.5 0.5 L8.5 7.5 H0.5 Z" fill="#6e6e6e" stroke="#6e6e6e" />
            </Svg>
            <div className="mt-1 mb-8 w-[9px] flex-1 rounded-full bg-[#6e6e6e]" />
            <Svg w={9} h={8}>
              <path d="M4.5 7.5 L8.5 0.5 H0.5 Z" fill="#6e6e6e" stroke="#6e6e6e" />
            </Svg>
          </div>
        </div>
      </div>
      <div className="flex h-8 shrink-0 border-t border-[#dcdcdc]">
        <button aria-label="前のシート" className="flex w-[62px] items-center justify-center text-[#999]">
          <Svg w={7} h={10}>
            <path d="M6 0.8 L1 5 L6 9.2" strokeWidth="1.3" />
          </Svg>
        </button>
        <button aria-label="次のシート" className="flex w-1 items-center justify-center text-[#999]">
          <Svg w={7} h={10}>
            <path d="M1 0.8 L6 5 L1 9.2" strokeWidth="1.3" />
          </Svg>
        </button>
        <button className="-mt-px ml-[50px] flex h-7 w-[69px] justify-center rounded-b bg-white text-sm shadow-[0_0_1px_rgba(0,0,0,0.35)]">
          <span className="mt-[3px] h-[22px] border-b-2 border-[#107c41] px-0.5 leading-[22px]">Sheet1</span>
        </button>
        <span className="mt-1.5 ml-1 h-[18px] w-px bg-[#d1d1d1]" />
        <button aria-label="新しいシート" className="ml-[41px] flex items-center text-[#444]">
          <Svg w={11} h={11}>
            <path d="M5.5 0 V11 M0 5.5 H11" />
          </Svg>
        </button>
        <div className="ml-auto flex w-[627px] items-center">
          <Svg w={2} h={11}>
            <path d="M1 0 V2 M1 4.5 V6.5 M1 9 V11" strokeWidth="2" />
          </Svg>
          <div className="mr-[19px] ml-4 flex h-[17px] flex-1 items-center rounded-full bg-[#f7f7f7] px-1">
            <Svg w={8} h={9}>
              <path d="M0.5 4.5 L7.5 0.5 V8.5 Z" fill="#6e6e6e" stroke="#6e6e6e" />
            </Svg>
            <div className="mr-8 ml-1 h-[9px] flex-1 rounded-full bg-[#6e6e6e]" />
            <Svg w={8} h={9}>
              <path d="M7.5 4.5 L0.5 0.5 V8.5 Z" fill="#6e6e6e" stroke="#6e6e6e" />
            </Svg>
          </div>
        </div>
      </div>
    </div>
  );
}

/* ---------- format pane ---------- */

const placement = [
  { text: "セルに合わせて移動やサイズ変更をする", key: "S" },
  { text: "セルに合わせて移動するがサイズ変更はしない", key: "M" },
  { text: "セルに合わせて移動やサイズ変更をしない", key: "D" },
];
const flags = [
  { text: "オブジェクトを印刷する", key: "P" },
  { text: "ロック", key: "L", info: true },
  { text: "文字列のロック", key: "T" },
];

function Section({ open = false, title }: { open?: boolean; title: string }) {
  return (
    <button aria-expanded={open} className="flex h-6 w-full items-center font-bold">
      <span className="flex w-3.5 justify-start">
        {open ? (
          <Svg w={9} h={6}>
            <path d="M0.8 0.8 L4.5 4.8 L8.2 0.8" strokeWidth="1.4" />
          </Svg>
        ) : (
          <Svg w={9} h={9}>
            <path d="M3 0.8 L7 4.5 L3 8.2" strokeWidth="1.4" />
          </Svg>
        )}
      </span>
      {title}
    </button>
  );
}

function FormatPane() {
  const [place, setPlace] = useState("S");
  return (
    <aside aria-label="図形の書式設定" className="mb-0.5 w-[346px] shrink-0 border-l border-[#c8c8c8] pr-3.5 pl-[13px] text-[11px]">
      <div className="flex h-[47px] items-center pr-[5px]">
        <h2 className="flex-1 text-xl">図形の書式設定</h2>
        <button aria-label="作業ウィンドウ オプション" className="mr-5">
          <Svg w={14} h={8}>
            <path d="M0.5 0.8 L7 7.2 L13.5 0.8" strokeWidth="1.1" />
          </Svg>
        </button>
        <button aria-label="閉じる">
          <Svg w={10} h={10}>
            <path d="M0.5 0.5 L9.5 9.5 M9.5 0.5 L0.5 9.5" strokeWidth="1.1" />
          </Svg>
        </button>
      </div>
      <div className="flex h-6 items-center pl-[5px] whitespace-nowrap">
        <button className="w-24 text-left">図形のオプション</button>
        <button>文字のオプション</button>
      </div>
      <div className="mt-1.5 flex h-8 items-center">
        <button aria-label="塗りつぶしと線" className="ml-1.5 w-8">
          <Svg w={24} h={23}>
            <path d="M1 13 L11 3 L20 12.5 L11 21.5 Z" fill="#fff" stroke="#777" strokeWidth="1.2" />
            <path d="M7.5 6 V2.5 C7.5 0 11.5 0 11.5 2.5 V9" stroke="#666" strokeWidth="1.1" />
            <circle cx="11.5" cy="9.5" r="1.3" fill="#666" stroke="none" />
            <path d="M13 5 L20 12.5 L21 21 C24 18 24.5 8 13 5 Z" fill="#777" stroke="none" />
          </Svg>
        </button>
        <button aria-label="効果" className="ml-3 w-8">
          <Svg w={20} h={24}>
            <path d="M10 1 L19 8 L16 18.5 H4 L1 8 Z" fill="#fff" stroke="#777" strokeWidth="1.2" />
            <path d="M4 19 H16" stroke="#777" strokeWidth="2.5" />
            <path d="M3.5 21 L2.5 24 M16.5 21 L17.5 24" stroke="#ccc" />
          </Svg>
        </button>
        <button aria-label="サイズとプロパティ" className="ml-1 flex h-8 w-8 items-center justify-center rounded border border-[#666] bg-white">
          <Svg w={22} h={22} className="text-[#217346]">
            <path d="M6.5 3 H21 M6.5 0.5 V5.5 M21 0.5 V5.5 M3 7.5 V21 M0.5 7.5 H5.5 M0.5 21 H5.5" strokeWidth="1.3" />
            <rect x="6.5" y="7" width="15" height="14.5" rx="1" fill="#217346" stroke="none" />
            <path d="M14 9 V12 M14 16.5 V19.5 M8.5 14.3 H11.5 M16.5 14.3 H19.5 M12.5 10.5 L14 9 L15.5 10.5 M12.5 18 L14 19.5 L15.5 18 M10 12.8 L8.5 14.3 L10 15.8 M18 12.8 L19.5 14.3 L18 15.8" stroke="#fff" />
          </Svg>
        </button>
      </div>
      <div className="mt-1.5 flex h-2 items-end text-[#cfcfcf]">
        <span className="h-px w-[95px] bg-[#cfcfcf]" />
        <Svg w={13} h={8}>
          <path d="M0 7.5 L6.5 0.7 L13 7.5" />
        </Svg>
        <span className="h-px flex-1 bg-[#cfcfcf]" />
      </div>
      <div className="pt-[5px] pl-2">
        <Section title="サイズ" />
        <div className="h-1" />
        <Section title="プロパティ" open />
        <div className="mt-1.5 pl-3.5">
          {placement.map((p) => (
            <label key={p.key} className="flex h-[23px] items-center whitespace-nowrap">
              <input
                type="radio"
                name="placement"
                checked={place === p.key}
                onChange={() => setPlace(p.key)}
                className="mr-1.5 h-3 w-3 appearance-none rounded-full border border-[#9a9a9a] bg-white checked:border-4 checked:border-[#107c41]"
              />
              <span>
                {p.text}(<u className="underline-offset-2">{p.key}</u>)
              </span>
            </label>
          ))}
          {flags.map((f) => (
            <div key={f.key} className="flex h-[25px] items-center">
              <label className="relative flex items-center whitespace-nowrap">
                <input type="checkbox" defaultChecked className="peer mr-[5px] h-[13px] w-[13px] appearance-none rounded-xs border border-[#9a9a9a] checked:border-[#107c41] checked:bg-[#107c41]" />
                <Svg w={13} h={13} className="pointer-events-none absolute left-0 hidden text-white peer-checked:block">
                  <path d="M3 6.5 L5.5 9 L10 4.2" strokeWidth="1.3" />
                </Svg>
                <span>
                  {f.text}(<u className="underline-offset-2">{f.key}</u>)
                </span>
              </label>
              {f.info && (
                <button aria-label="情報" className="ml-2">
                  <Svg w={13} h={13} className="text-[#2a8fd0]">
                    <circle cx="6.5" cy="6.5" r="5.8" strokeWidth="1.2" />
                    <path d="M6.5 3.5 V9.5" strokeWidth="1.6" />
                  </Svg>
                </button>
              )}
            </div>
          ))}
        </div>
        <div className="h-3" />
        <Section title="テキスト ボックス" />
      </div>
    </aside>
  );
}

/* ---------- status bar ---------- */

function StatusBar() {
  return (
    <footer className="flex h-[22px] shrink-0 items-center border-t border-[#c6c6c6] bg-[#f5f5f5] pl-2 text-xs">
      <span>準備完了</span>
      <button aria-label="マクロの記録" className="ml-5">
        <Svg w={15} h={13}>
          <path d="M5 11.5 H0.7 V0.7 H13.5 V3 M0.7 2.5 H13.5 M3 5.5 H5.5 M3 8.5 H5" strokeWidth="1.2" />
          <circle cx="9.7" cy="8" r="4" strokeWidth="1.2" />
          <circle cx="9.7" cy="8" r="1.8" fill="currentColor" />
        </Svg>
      </button>
      <div className="ml-auto flex h-full items-center">
        <button aria-label="標準" className="flex h-full w-10 items-center justify-center bg-[#dedede]">
          <Svg w={13} h={13}>
            <path d="M0.5 0.5 H12.5 V12.5 H0.5 Z M4.5 0.5 V12.5 M8.5 0.5 V12.5 M0.5 4.5 H12.5 M0.5 8.5 H12.5" />
          </Svg>
        </button>
        <button aria-label="ページ レイアウト" className="flex h-full w-10 items-center justify-center">
          <Svg w={14} h={13}>
            <path d="M0.5 0.5 H13.5 V12.5 H0.5 Z M3.5 2.5 H10.5 V10.5 H3.5 Z M5 4.5 H9 M5 6.5 H9 M5 8.5 H9" />
          </Svg>
        </button>
        <button aria-label="改ページ プレビュー" className="flex h-full w-10 items-center justify-center">
          <Svg w={14} h={13}>
            <path d="M0.5 0.5 H13.5 V12.5 H0.5 Z M4.5 0.5 V7.5 H9.5 V0.5" />
          </Svg>
        </button>
        <button aria-label="縮小" className="ml-1.5 flex w-2">
          <Svg w={8} h={8}>
            <path d="M0 4.5 H8" strokeWidth="1.2" />
          </Svg>
        </button>
        <input
          type="range"
          aria-label="ズーム"
          defaultValue={50}
          className="mx-[5px] h-3 w-[100px] appearance-none bg-transparent [&::-webkit-slider-runnable-track]:h-px [&::-webkit-slider-runnable-track]:bg-[#666] [&::-webkit-slider-thumb]:-mt-[5px] [&::-webkit-slider-thumb]:h-[11px] [&::-webkit-slider-thumb]:w-1 [&::-webkit-slider-thumb]:appearance-none [&::-webkit-slider-thumb]:bg-[#5a5a5a]"
        />
        <button aria-label="拡大" className="flex w-2">
          <Svg w={8} h={8}>
            <path d="M0 4.5 H8 M4 0.5 V8" />
          </Svg>
        </button>
        <span className="w-[65px] pl-3.5">100%</span>
      </div>
    </footer>
  );
}

export default function App() {
  return (
    <div
      lang="ja"
      className="flex h-screen flex-col overflow-hidden border-x border-b border-[#107c41] bg-[#f0f0f0] font-['Noto_Sans','Noto_Sans_CJK_JP',sans-serif] text-[#262626] [font-feature-settings:'palt']"
    >
      <TitleBar />
      <TabRow />
      <Ribbon />
      <FormulaBar />
      <main className="flex min-h-0 flex-1">
        <SheetArea />
        <FormatPane />
      </main>
      <StatusBar />
    </div>
  );
}
